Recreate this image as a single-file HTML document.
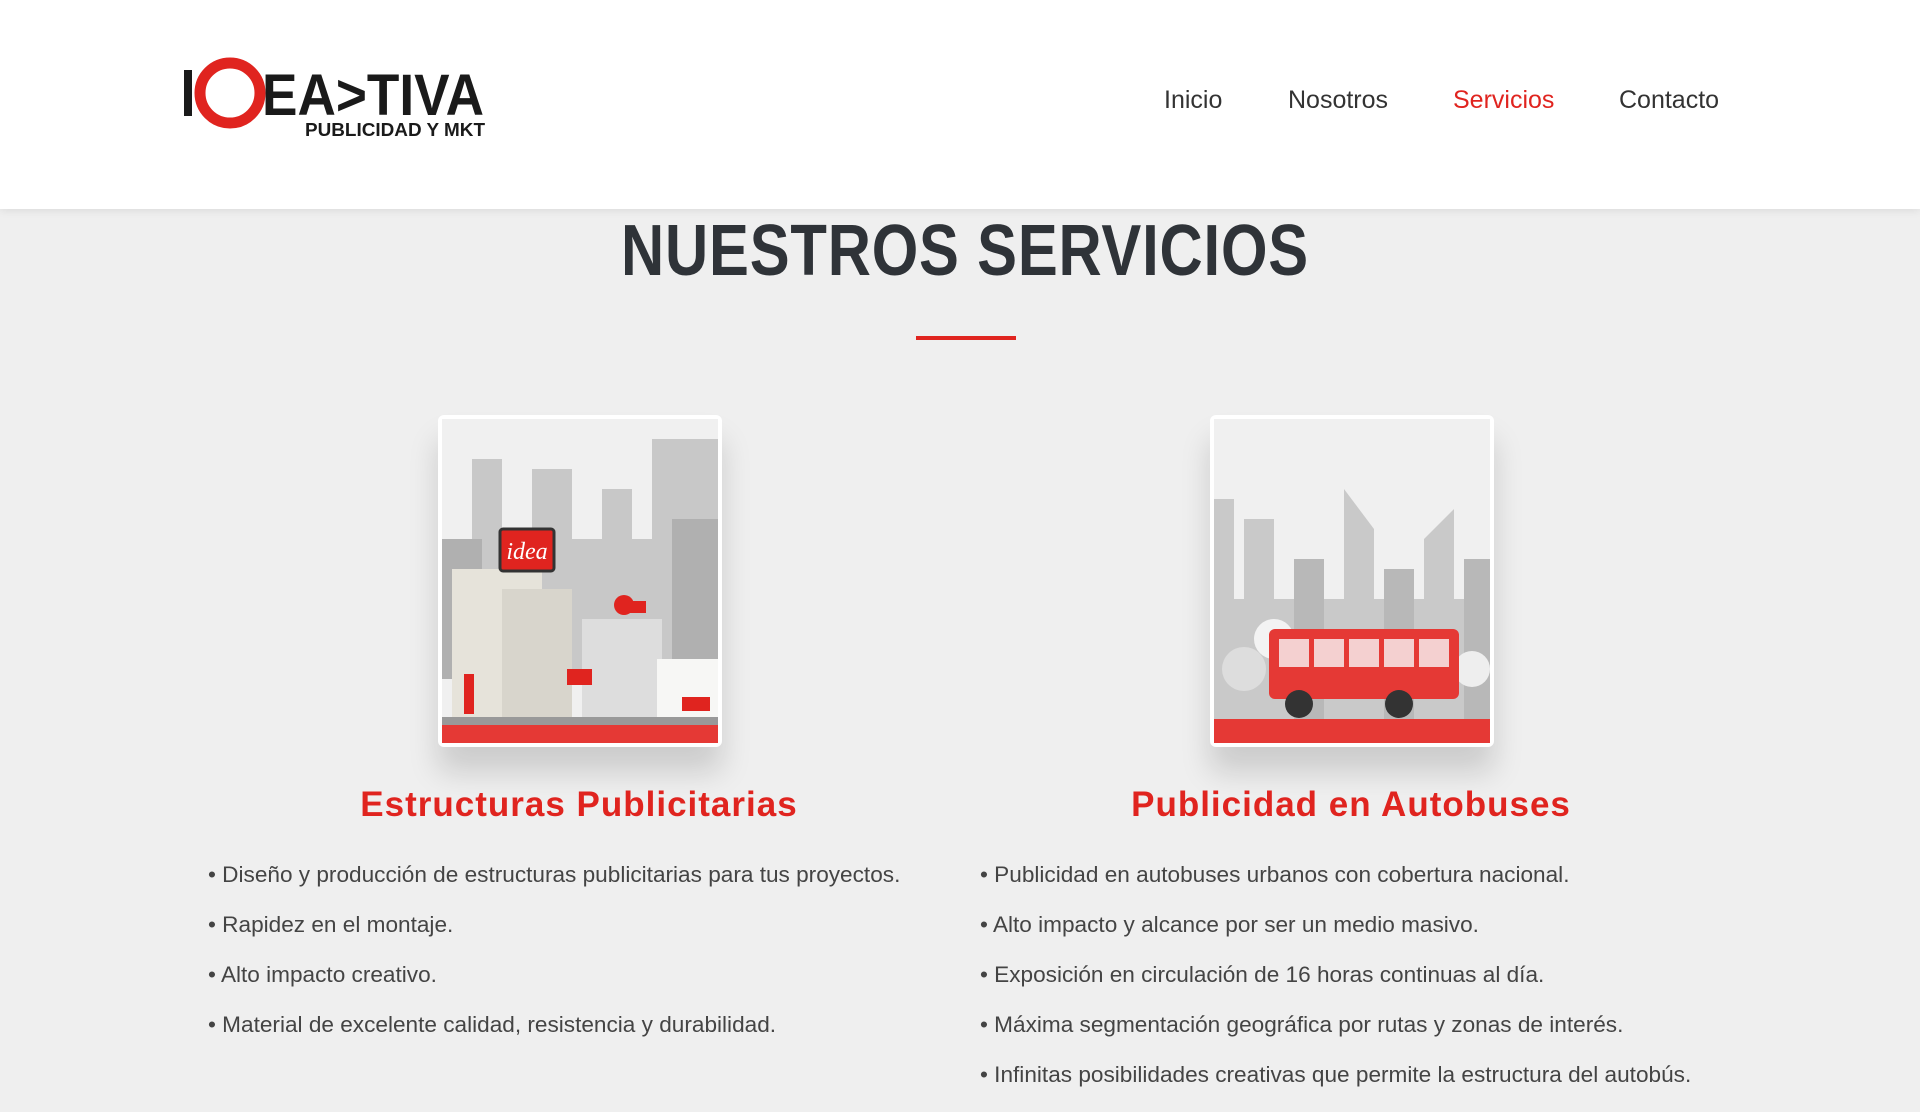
<!DOCTYPE html>
<html><head><meta charset="utf-8"><style>
*{margin:0;padding:0;box-sizing:border-box}
body{width:1920px;height:1082px;overflow:hidden;background:#efefef;font-family:"Liberation Sans",sans-serif;position:relative}
.hdr{position:absolute;left:0;top:0;width:1920px;height:209px;background:#fff;box-shadow:0 2px 8px rgba(0,0,0,.08)}
.nav a{position:absolute;top:86px;font-size:25px;color:#333;text-decoration:none}
h1{position:absolute;left:0;width:1930px;top:210px;text-align:center;font-size:72px;font-weight:bold;color:#2f3338;letter-spacing:1px;transform:scaleX(0.83);transform-origin:965px 0}
.line{position:absolute;left:916px;top:336px;width:100px;height:4px;background:#e0241f}
.card{position:absolute;top:415px;width:284px;height:332px;background:#fff;border-radius:6px;padding:4px;box-shadow:0 25px 30px rgba(0,0,0,.15)}
.card svg{display:block;width:276px;height:324px}
h2{position:absolute;top:785px;width:700px;text-align:center;font-size:35px;font-weight:bold;color:#e0241f;letter-spacing:1px}
ul{position:absolute;list-style:none;font-size:22.6px;color:#444}
li{height:50px;line-height:26px}
</style></head><body>
<div class="hdr">
<svg style="position:absolute;left:184px;top:55px" width="302" height="84" viewBox="0 0 302 84">
<rect x="0" y="15" width="8" height="46" fill="#1a1a1a"/>
<circle cx="46" cy="38" r="30" fill="none" stroke="#e0241f" stroke-width="11"/>
<text x="78" y="60" font-family="Liberation Sans" font-weight="bold" font-size="58" fill="#1a1a1a" textLength="222" lengthAdjust="spacingAndGlyphs">EA&gt;TIVA</text>
<text x="121" y="81" font-family="Liberation Sans" font-weight="bold" font-size="18" fill="#1a1a1a" textLength="180" lengthAdjust="spacingAndGlyphs">PUBLICIDAD Y MKT</text>
</svg>
<div class="nav"><a style="left:1164px">Inicio</a><a style="left:1288px">Nosotros</a><a style="left:1453px;color:#e0241f">Servicios</a><a style="left:1619px">Contacto</a></div>
</div>
<h1>NUESTROS SERVICIOS</h1>
<div class="line"></div>
<div class="card" style="left:438px"><svg viewBox="0 0 276 324">
<rect width="276" height="324" fill="#f0f0f0"/>
<g fill="#c8c8c8"><rect x="30" y="40" width="30" height="220"/><rect x="90" y="50" width="40" height="210"/><rect x="160" y="70" width="30" height="190"/><rect x="210" y="20" width="66" height="240"/><rect x="0" y="120" width="276" height="140"/></g>
<g fill="#b0b0b0"><rect x="0" y="120" width="40" height="140"/><rect x="230" y="100" width="46" height="160"/></g>
<rect x="10" y="150" width="90" height="150" fill="#e6e3da"/><rect x="60" y="170" width="70" height="130" fill="#d8d5cc"/><rect x="140" y="200" width="80" height="100" fill="#ddd"/>
<rect x="215" y="240" width="61" height="60" fill="#f7f7f5"/>
<rect x="58" y="110" width="54" height="42" rx="3" fill="#e0241f" stroke="#333" stroke-width="3"/>
<text x="85" y="140" font-size="24" font-style="italic" fill="#fff" text-anchor="middle" font-family="Liberation Serif">idea</text>
<circle cx="182" cy="186" r="10" fill="#e0241f"/><rect x="182" y="182" width="22" height="12" fill="#e0241f"/>
<rect x="125" y="250" width="25" height="16" fill="#e0241f"/><rect x="240" y="278" width="28" height="14" fill="#e0241f"/><rect x="22" y="255" width="10" height="40" fill="#e0241f"/>
<rect x="0" y="298" width="276" height="8" fill="#999"/><rect x="0" y="306" width="276" height="18" fill="#e53935"/>
</svg></div>
<div class="card" style="left:1210px"><svg viewBox="0 0 276 324">
<rect width="276" height="324" fill="#f0f0f0"/>
<g fill="#c9c9c9"><rect x="0" y="80" width="20" height="220"/><rect x="30" y="100" width="30" height="200"/><polygon points="130,70 160,110 160,300 130,300"/><polygon points="210,120 240,90 240,300 210,300"/><rect x="0" y="180" width="276" height="120"/></g>
<g fill="#b8b8b8"><rect x="80" y="140" width="30" height="160"/><rect x="170" y="150" width="30" height="150"/><rect x="250" y="140" width="26" height="160"/></g>
<circle cx="30" cy="250" r="22" fill="#ddd"/><circle cx="258" cy="250" r="18" fill="#eee"/><circle cx="60" cy="220" r="20" fill="#f3f3f3"/>
<rect x="55" y="210" width="190" height="70" rx="6" fill="#e53935"/>
<g fill="#f4d0d0"><rect x="65" y="220" width="30" height="28"/><rect x="100" y="220" width="30" height="28"/><rect x="135" y="220" width="30" height="28"/><rect x="170" y="220" width="30" height="28"/><rect x="205" y="220" width="30" height="28"/></g>
<circle cx="85" cy="285" r="14" fill="#333"/><circle cx="185" cy="285" r="14" fill="#333"/>
<rect x="0" y="300" width="276" height="24" fill="#e53935"/>
</svg></div>
<h2 style="left:229px">Estructuras Publicitarias</h2>
<h2 style="left:1001px">Publicidad en Autobuses</h2>
<ul style="left:208px;top:862px">
<li>• Diseño y producción de estructuras publicitarias para tus proyectos.</li>
<li>• Rapidez en el montaje.</li>
<li>• Alto impacto creativo.</li>
<li>• Material de excelente calidad, resistencia y durabilidad.</li>
</ul>
<ul style="left:980px;top:862px">
<li>• Publicidad en autobuses urbanos con cobertura nacional.</li>
<li>• Alto impacto y alcance por ser un medio masivo.</li>
<li>• Exposición en circulación de 16 horas continuas al día.</li>
<li>• Máxima segmentación geográfica por rutas y zonas de interés.</li>
<li>• Infinitas posibilidades creativas que permite la estructura del autobús.</li>
</ul>
</body></html>
